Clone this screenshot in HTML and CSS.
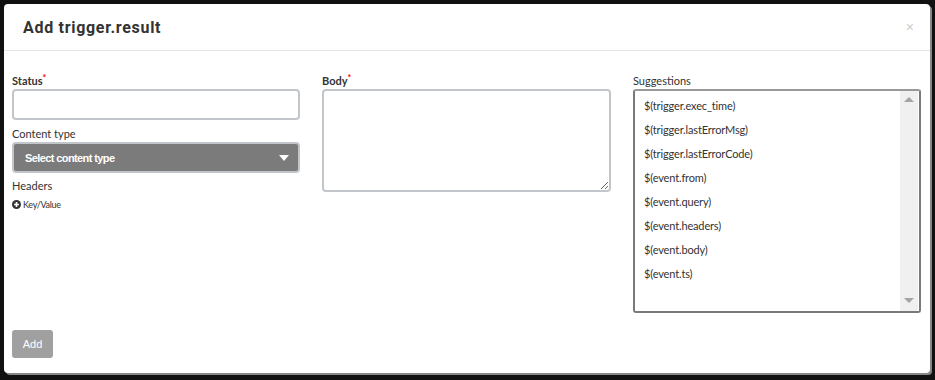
FILE: index.html
```html
<!DOCTYPE html>
<html>
<head>
    <title>Add trigger.result</title>
    <link rel="stylesheet" href="styles.css">
</head>
<body>
<div class="modal">
    <div class="modal-header">
        <h4 class="modal-title">Add trigger.result</h4>
        <span class="close">&times;</span>
    </div>
    <div class="modal-body">
        <div class="col">
            <label class="lbl">Status<span class="req">*</span></label>
            <input class="field" type="text">
            <label class="lbl">Content type</label>
            <div class="select">
                <span>Select content type</span>
                <span class="caret"></span>
            </div>
            <label class="lbl">Headers</label>
            <a class="add-kv">
                <svg width="9" height="9" viewBox="0 0 10 10"><circle cx="5" cy="5" r="5" fill="#333"/><path d="M5 2.3v5.4M2.3 5h5.4" stroke="#fff" stroke-width="1.8"/></svg>
                Key/Value
            </a>
        </div>
        <div class="col">
            <label class="lbl">Body<span class="req">*</span></label>
            <textarea class="field area"></textarea>
        </div>
        <div class="col">
            <label class="lbl">Suggestions</label>
            <div class="suggest">
                <ul class="suggest-list">
                    <li>$(trigger.exec_time)</li>
                    <li>$(trigger.lastErrorMsg)</li>
                    <li>$(trigger.lastErrorCode)</li>
                    <li>$(event.from)</li>
                    <li>$(event.query)</li>
                    <li>$(event.headers)</li>
                    <li>$(event.body)</li>
                    <li>$(event.ts)</li>
                </ul>
                <div class="scroll">
                    <span class="arr up"></span>
                    <span class="arr down"></span>
                </div>
            </div>
        </div>
    </div>
    <div class="modal-footer">
        <button class="btn-add">Add</button>
    </div>
</div>
</body>
</html>
```

FILE: styles.css
```css
html, body {
    margin: 0;
    height: 100%;
    background-color: #111;
}

body {
    padding: 4px 5px 7px 4px;
    box-sizing: border-box;
    font-family: Lato, "Liberation Sans", sans-serif;
    color: #333;
}

.modal {
    height: 100%;
    background: #fff;
    border-radius: 4px;
    box-shadow: 2px 2px 0 #888;
    display: flex;
    flex-direction: column;
}

.modal-header {
    height: 46px;
    border-bottom: 1px solid #e5e5e5;
    display: flex;
    align-items: center;
    justify-content: space-between;
    padding: 0 16px 0 19px;
}

.modal-title {
    margin: 0;
    font-family: Roboto, "DejaVu Sans", sans-serif;
    font-size: 16px;
    font-weight: bold;
    color: #333;
    letter-spacing: 0.7px;
}

.close {
    color: #ccc;
    font-size: 14px;
    font-family: "Liberation Sans", sans-serif;
}

.modal-body {
    display: grid;
    grid-template-columns: 288px 289px 288px;
    column-gap: 22px;
    padding: 22px 0 0 8px;
}

.col {
    display: flex;
    flex-direction: column;
}

.lbl {
    font-size: 11px;
    line-height: 16px;
    display: block;
}

.col .lbl:first-child {
    font-weight: bold;
}

.col:last-child .lbl:first-child {
    font-weight: normal;
}

.req {
    color: red;
    font-size: 9px;
    vertical-align: top;
    line-height: 10px;
}

.field {
    box-sizing: border-box;
    height: 31px;
    border: 2px solid #c2c6ca;
    border-radius: 4px;
    margin: 0 0 6px 0;
    padding: 4px;
    font-family: inherit;
}

.area {
    height: 103px;
    resize: vertical;
}

.select {
    box-sizing: border-box;
    height: 31px;
    background: #7b7b7b;
    border: 2px solid #c2c6ca;
    border-radius: 4px;
    color: #fff;
    font-family: "Liberation Sans", Arial, sans-serif;
    font-weight: bold;
    font-size: 11px;
    letter-spacing: -0.6px;
    display: flex;
    align-items: center;
    justify-content: space-between;
    padding: 0 9px 0 11px;
    margin-bottom: 5px;
}

.caret {
    width: 0;
    height: 0;
    border-left: 5px solid transparent;
    border-right: 5px solid transparent;
    border-top: 6px solid #fff;
}

.add-kv {
    font-size: 9px;
    display: flex;
    align-items: center;
    gap: 2px;
    margin-top: 5px;
    letter-spacing: -0.3px;
}

.suggest {
    box-sizing: border-box;
    height: 224px;
    border: 2px solid #7a7a7a;
    border-top-color: #999;
    border-radius: 3px;
    display: flex;
    overflow: hidden;
}

.suggest-list {
    flex: 1;
    list-style: none;
    margin: 0;
    padding: 7px 0 0 9px;
    font-size: 11px;
    letter-spacing: -0.15px;
}

.suggest-list li {
    height: 24px;
    line-height: 16px;
}

.scroll {
    width: 18px;
    background: #f0f0f0;
    position: relative;
    margin-right: 1px;
}

.arr {
    position: absolute;
    left: 4px;
    width: 0;
    height: 0;
    border-left: 5px solid transparent;
    border-right: 5px solid transparent;
}

.arr.up {
    top: 6px;
    border-bottom: 5px solid #a3a3a3;
}

.arr.down {
    bottom: 8px;
    border-top: 5px solid #a3a3a3;
}

.modal-footer {
    padding: 17px 0 0 8px;
}

.btn-add {
    width: 41px;
    height: 28px;
    background: #a0a0a0;
    border: none;
    border-radius: 3px;
    color: #fff;
    font-family: "Liberation Sans", Arial, sans-serif;
    font-size: 11px;
    padding: 0;
}
```
